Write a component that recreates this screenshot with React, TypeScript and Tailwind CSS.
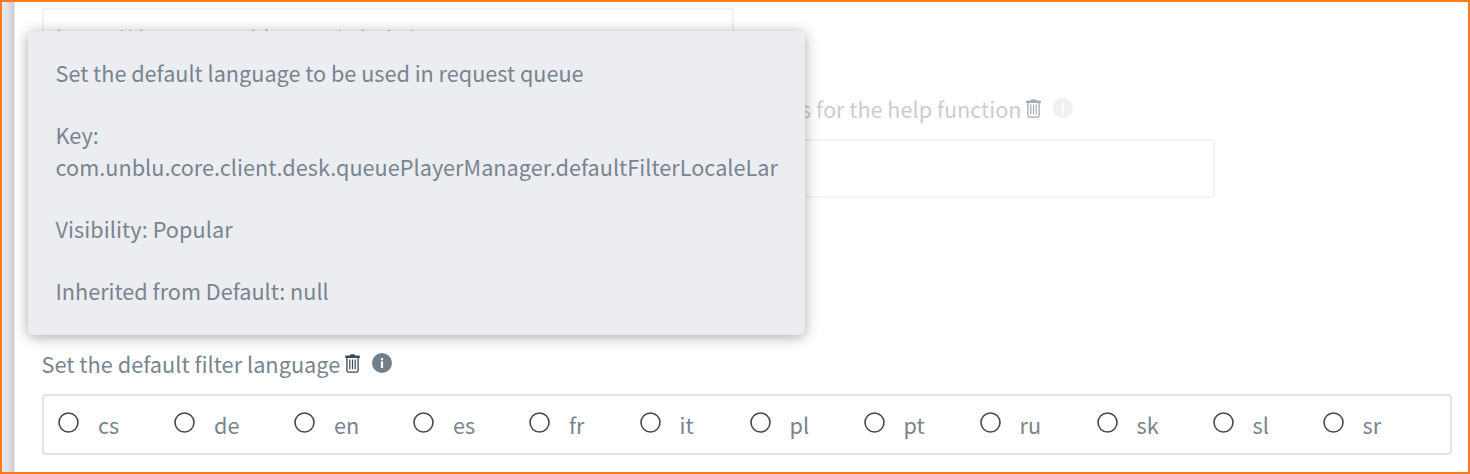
import React from "react";

const languages = [
  { code: "cs", width: "w-[116px]" },
  { code: "de", width: "w-[120px]" },
  { code: "en", width: "w-[119px]" },
  { code: "es", width: "w-[116px]" },
  { code: "fr", width: "w-[110.5px]" },
  { code: "it", width: "w-[110px]" },
  { code: "pl", width: "w-[114px]" },
  { code: "pt", width: "w-[116px]" },
  { code: "ru", width: "w-[117px]" },
  { code: "sk", width: "w-[116px]" },
  { code: "sl", width: "w-[110px]" },
  { code: "sr", width: "w-[80px]" },
];

function TrashIcon({ className }: { className: string }) {
  return (
    <svg width="15" height="19" viewBox="0 0 15 19" className={className} fill="none" stroke="currentColor">
      <path d="M5 1.5C5 .6 5.4.3 6.2.3h2.6c.8 0 1.2.3 1.2 1.2h4.2c.4 0 .6.2.6.6v1.800H.2V2.1c0-.4.2-.6.6-.6z" fill="currentColor" stroke="none" />
      <path d="M1.9 3.5v13c0 1 .5 1.6 1.5 1.6h8.200c1 0 1.500-.6 1.500-1.600v-13" strokeWidth="1.300" />
      <path d="M4.800 5.500v9.800M7.500 5.500v9.800M10.200 5.500v9.800" strokeWidth="1.200" />
    </svg>
  );
}

function InfoIcon({ className }: { className: string }) {
  return (
    <svg width="20" height="20" viewBox="0 0 20 20" className={className}>
      <circle cx="10" cy="10" r="10" fill="currentColor" />
      <rect x="8.900" y="5" width="2.200" height="2.200" fill="white" />
      <rect x="8.900" y="8.200" width="2.200" height="6.800" fill="white" />
    </svg>
  );
}

export default function App() {
  return (
    <div className="relative flex h-[474px] w-[1470px] overflow-hidden border-2 border-[#fc7a1e] bg-white font-['Noto_Sans_CJK_SC',sans-serif] text-[21.65px] leading-[31.2px] text-[#78848f]">
      <div className="w-[13px] shrink-0 border-r border-[#e4e5e7] bg-linear-to-r from-[#e8e9ed] via-[#dfe0e3] to-[#cbccd0]" />
      <main className="flex w-[1453px] shrink-0 flex-col pl-[27px]">
        <div className="mt-[6px] h-[58px] w-[692px] shrink-0 rounded-[3px] border-2 border-[#f0f1f2] pt-[12px] pl-[12px] whitespace-nowrap text-[#a5abb2]">
          https://demo.ca.unblu.com/admin/
        </div>
        <div className="mt-[26px] flex h-[38px] w-[1031px] shrink-0 justify-end text-[#c9cdd2]">
          <span className="mt-[1px] whitespace-nowrap">s for the help function</span>
          <TrashIcon className="mt-[7px] ml-[4.5px] shrink-0 text-[#a5abb1]" />
          <InfoIcon className="mt-[6px] ml-[12px] shrink-0 text-[#f0f1f2]" />
        </div>
        <div className="mt-[9px] h-[59px] w-[1173px] shrink-0 rounded-[4px] border-2 border-[#f3f3f4]" />
        <div className="mt-[150px] flex h-[32px] shrink-0">
          <span className="-ml-[0.5px] w-[303px] whitespace-nowrap text-[21.750px]">Set the default filter language</span>
          <TrashIcon className="mt-[6px] ml-[0.5px] shrink-0 text-[#3d4756]" />
          <InfoIcon className="mt-[5px] ml-[12px] shrink-0 text-[#727e89]" />
        </div>
        <div className="mt-[14px] flex h-[61px] w-[1409.5px] shrink-0 rounded-[4px] border-2 border-[#dfe3e7] pt-[12px] pl-[14px]">
          {languages.map(({ code, width }) => (
            <label key={code} className={`flex shrink-0 ${width}`}>
              <span className="mt-[4px] mr-[19px] flex size-[21px] shrink-0">
                <svg width="21" height="21" viewBox="0 0 21 21" fill="none" stroke="#484848" strokeWidth="1.600">
                  <circle cx="10.500" cy="10.500" r="9.500" />
                </svg>
              </span>
              <span className="mt-[1px]">{code}</span>
            </label>
          ))}
        </div>
      </main>
      <div role="tooltip" className="absolute top-[29px] left-[25.5px] h-[304px] w-[777.5px] rounded-[6px] bg-[#ecedf1] pt-[26px] pl-[28px] whitespace-nowrap shadow-[0_2px_14px_rgba(0,0,0,0.34)]">
        <p className="mb-[31.200px] tracking-[-0.01px]">Set the default language to be used in request queue</p>
        <p className="mb-[31.200px] tracking-[0.025px]">Key:<br />com.unblu.core.client.desk.queuePlayerManager.defaultFilterLocaleLar</p>
        <p className="mb-[31.200px] tracking-[0.08px]">Visibility: Popular</p>
        <p>Inherited from Default: null</p>
      </div>
    </div>
  );
}
